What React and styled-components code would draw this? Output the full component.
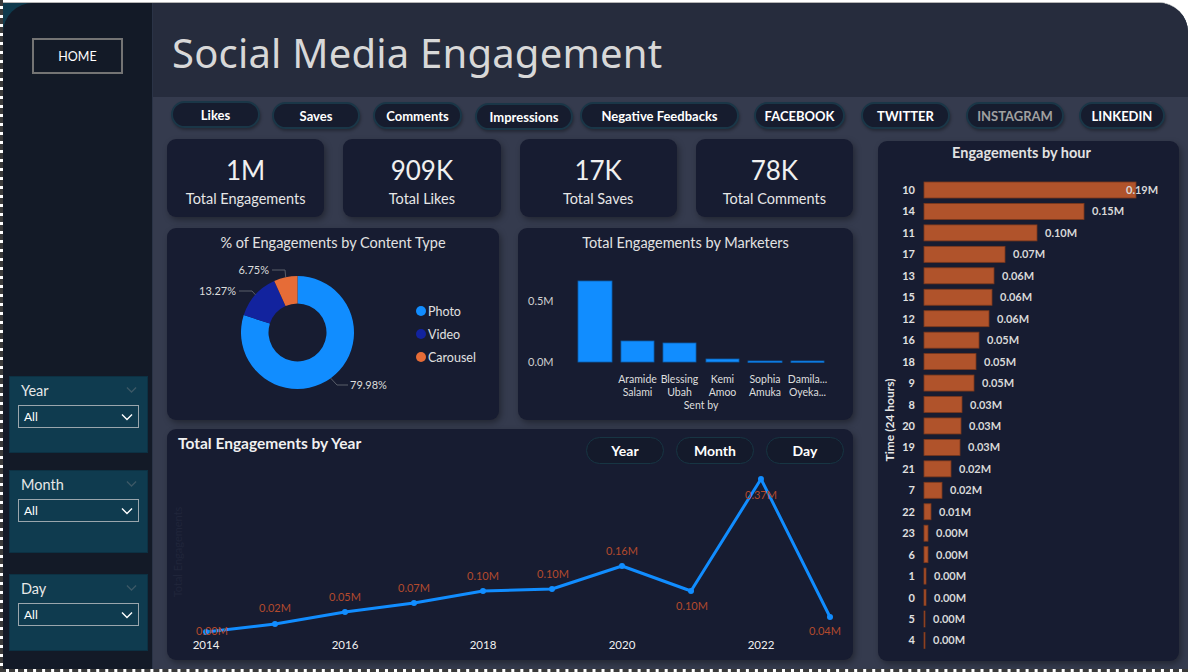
import React from "react";
import styled, { createGlobalStyle } from "styled-components";

const GlobalStyle = createGlobalStyle`
  html, body { margin: 0; padding: 0; background: #fff; }
  body { font-family: Lato, "Noto Sans", sans-serif; }
`;

const Page = styled.div`
  width: 1188px;
  height: 672px;
  box-sizing: border-box;
  padding-top: 2px;
  border-left: 3px dashed #3a3a3a;
  border-bottom: 3px dashed #3a3a3a;
  background: #fff;
  overflow: hidden;
`;

const Frame = styled.div`
  height: 100%;
  box-sizing: border-box;
  border-top: 1px solid #b5b5b5;
  border-top-right-radius: 30px;
  background: #0f3a4d;
  display: flex;
  overflow: hidden;
`;

const Sidebar = styled.aside`
  width: 150px;
  flex-shrink: 0;
  background: #131a27;
  border-right: 1px solid #2a3346;
  border-top-left-radius: 30px;
  display: flex;
  flex-direction: column;
  padding: 35px 0 18px 6px;
  box-sizing: border-box;
`;

const HomeButton = styled.div`
  width: 91px;
  height: 36px;
  margin-left: 23px;
  box-sizing: border-box;
  border: 2px solid #747474;
  color: #fff;
  font-size: 12.5px;
  display: flex;
  align-items: center;
  justify-content: center;
`;

const SlicerStack = styled.div`
  margin-top: auto;
  display: flex;
  flex-direction: column;
`;

const Slicer = styled.div`
  width: 139px;
  height: ${(p) => p.$h}px;
  margin-top: ${(p) => p.$gap || 0}px;
  box-sizing: border-box;
  background: #0f3b4f;
  border: 1px solid #0c3143;
  padding: 4px 10px 0 11px;
`;

const SlicerHead = styled.div`
  display: flex;
  justify-content: space-between;
  align-items: center;
  height: 18px;
  color: #e8e8e8;
  font-size: 14.5px;
`;

const Dropdown = styled.div`
  margin: 6px 0 0 -3px;
  width: 121px;
  height: 23px;
  box-sizing: border-box;
  border: 1px solid #9aa6ad;
  display: flex;
  align-items: center;
  justify-content: space-between;
  padding: 0 5px 0 5px;
  color: #fff;
  font-size: 12px;
`;

const Main = styled.main`
  flex: 1;
  display: flex;
  flex-direction: column;
  background: #353b4e;
`;

const Header = styled.header`
  height: 94px;
  flex-shrink: 0;
  background: #262c3d;
  display: flex;
  align-items: center;
  padding: 4px 0 0 19px;
  box-sizing: border-box;
`;

const Title = styled.h1`
  margin: 0;
  font-family: "Noto Sans", sans-serif;
  font-weight: 400;
  font-size: 40px;
  letter-spacing: 0.2px;
  color: #d8d8d8;
`;

const Content = styled.div`
  padding: 4px 8px 0 14px;
`;

const PillRow = styled.div`
  display: flex;
  padding: 0 0 0 4px;
  height: 29px;
`;

const Pill = styled.div`
  width: ${(p) => p.$w}px;
  height: 27px;
  margin-left: ${(p) => p.$gap}px;
  margin-top: ${(p) => p.$dy}px;
  box-sizing: border-box;
  border-radius: 14px;
  background: #161c2e;
  border: 2px solid #1a3647;
  box-shadow: 1px 2px 3px rgba(0, 0, 0, 0.3);
  color: ${(p) => (p.$muted ? "#a0a0a0" : "#fff")};
  font-weight: 700;
  font-size: 13px;
  display: flex;
  align-items: center;
  justify-content: center;
`;

const Body = styled.div`
  display: grid;
  grid-template-columns: 686px 301px;
  column-gap: 25px;
  margin-top: 9px;
`;

const LeftCol = styled.div`
  display: flex;
  flex-direction: column;
`;

const KpiRow = styled.div`
  display: grid;
  grid-template-columns: repeat(4, 1fr);
  column-gap: 19px;
  height: 78px;
`;

const ChartRow = styled.div`
  display: grid;
  grid-template-columns: 332px 335px;
  column-gap: 19px;
  height: 192px;
  margin-top: 11px;
`;

const Card = styled.section`
  background: #171c31;
  border-radius: 9px;
  box-shadow: 2px 3px 6px rgba(0, 0, 0, 0.35);
  overflow: hidden;
  margin-top: ${(p) => p.$top || 0}px;
  height: ${(p) => (p.$h ? `${p.$h}px` : "auto")};
`;

const KpiCard = styled(Card)`
  display: flex;
  flex-direction: column;
  align-items: center;
  padding-top: 17px;
  box-sizing: border-box;
`;

const KpiValue = styled.div`
  font-size: 26px;
  line-height: 28px;
  color: #f0f0f0;
`;

const KpiLabel = styled.div`
  margin-top: 6px;
  font-size: 14.5px;
  line-height: 18px;
  color: #e6e6e6;
`;

const ChartTitle = styled.div`
  height: 30px;
  box-sizing: border-box;
  padding-top: ${(p) => (p.$bold ? 3 : 6)}px;
  padding-right: ${(p) => (p.$bold ? 14 : 0)}px;
  line-height: 18px;
  text-align: center;
  font-size: 14.5px;
  color: #e2e2e2;
  font-weight: ${(p) => (p.$bold ? 700 : 400)};
`;

const LineHead = styled.div`
  display: flex;
  justify-content: space-between;
  align-items: flex-start;
  padding: 8px 9px 0 11px;
  height: 35px;
  box-sizing: border-box;
`;

const LineTitle = styled.div`
  margin-top: -4px;
  line-height: 20px;
  font-weight: 700;
  font-size: 15.5px;
  color: #f0f0f0;
`;

const ToggleGroup = styled.div`
  display: flex;
  gap: 12px;
`;

const Toggle = styled.div`
  width: 78px;
  height: 27px;
  box-sizing: border-box;
  border-radius: 14px;
  border: 1px solid #173543;
  background: #141a2b;
  color: #fff;
  font-weight: 700;
  font-size: 14px;
  display: flex;
  align-items: center;
  justify-content: center;
`;

const Chev = ({ color = "#fff", w = 12 }) => (
  <svg width={w} height={w / 2 + 2} viewBox="0 0 12 8">
    <polyline points="1,1.5 6,6.5 11,1.5" fill="none" stroke={color} strokeWidth="1.4" />
  </svg>
);

const pt = (cx, cy, rad, deg) => {
  const a = ((deg - 90) * Math.PI) / 180;
  return [cx + rad * Math.cos(a), cy + rad * Math.sin(a)];
};

const arc = (cx, cy, R, r, a0, a1) => {
  const large = a1 - a0 > 180 ? 1 : 0;
  const [x0, y0] = pt(cx, cy, R, a0);
  const [x1, y1] = pt(cx, cy, R, a1);
  const [x2, y2] = pt(cx, cy, r, a1);
  const [x3, y3] = pt(cx, cy, r, a0);
  return `M${x0} ${y0} A${R} ${R} 0 ${large} 1 ${x1} ${y1} L${x2} ${y2} A${r} ${r} 0 ${large} 0 ${x3} ${y3} Z`;
};

const Donut = () => {
  const cx = 130.5;
  const cy = 74.5;
  const segs = [
    [0, 287.93, "#118dff"],
    [287.93, 335.7, "#12239e"],
    [335.7, 360, "#e66c37"],
  ];
  const legend = [
    ["Photo", "#118dff"],
    ["Video", "#12239e"],
    ["Carousel", "#e66c37"],
  ];
  return (
    <svg width="332" height="162" fontFamily="Lato, sans-serif">
      {segs.map(([a0, a1, c]) => (
        <path key={c} d={arc(cx, cy, 56.5, 29, a0, a1)} fill={c} />
      ))}
      <g stroke="#5a5e6a" fill="none" strokeWidth="1">
        <polyline points="105,12 118,12 118.7,19" />
        <polyline points="72,33 85,33 88.4,36.8" />
        <polyline points="163.7,120.2 170,127 181,127" />
      </g>
      <g fill="#dcdcdc" fontSize="11">
        <text x="102" y="16" textAnchor="end">6.75%</text>
        <text x="69" y="37" textAnchor="end">13.27%</text>
        <text x="183" y="131">79.98%</text>
      </g>
      {legend.map(([l, c], i) => (
        <g key={l}>
          <circle cx="254" cy={53 + i * 23} r="5" fill={c} />
          <text x="261" y={57.5 + i * 23} fill="#e0e0e0" fontSize="12.5">{l}</text>
        </g>
      ))}
    </svg>
  );
};

const marketers = [
  [60, 94, 23, null, null],
  [103, 136, 83, "Aramide", "Salami"],
  [145, 178, 85, "Blessing", "Ubah"],
  [188, 221, 101, "Kemi", "Amoo"],
  [230, 264, 103, "Sophia", "Amuka"],
  [273, 306, 103, "Damila...", "Oyeka..."],
];

const MarketerBars = () => (
  <svg width="335" height="161" fontFamily="Lato, sans-serif">
    <g fill="#d0d0d0" fontSize="11">
      <text x="10" y="47">0.5M</text>
      <text x="10" y="108">0.0M</text>
    </g>
    {marketers.map(([x0, x1, top, a, b]) => (
      <g key={x0}>
        <rect x={x0} y={top} width={x1 - x0} height={Math.max(104 - top, 1.5)} fill="#118dff" stroke="#0c5fae" strokeWidth="0.8" />
        {a && (
          <text x={(x0 + x1) / 2} y="125" textAnchor="middle" fill="#dedede" fontSize="10.5">{a}</text>
        )}
        {b && (
          <text x={(x0 + x1) / 2} y="138" textAnchor="middle" fill="#dedede" fontSize="10.5">{b}</text>
        )}
      </g>
    ))}
    <text x="183" y="151" textAnchor="middle" fill="#dedede" fontSize="10.5">Sent by</text>
  </svg>
);

const years = [
  [39, 168, "0.00M", 45, 171],
  [108, 160, "0.02M", 108, 148],
  [178, 148, "0.05M", 178, 137],
  [247, 139, "0.07M", 247, 128],
  [316, 127, "0.10M", 316, 116],
  [385, 125, "0.10M", 386, 114],
  [455, 102, "0.16M", 455, 91],
  [524, 127, "0.10M", 525, 146],
  [594, 15, "0.37M", 594, 35],
  [663, 153, "0.04M", 658, 171],
];

const YearLine = () => (
  <svg width="684" height="196" fontFamily="Lato, sans-serif">
    <text x="15" y="88" transform="rotate(-90 15 88)" textAnchor="middle" fill="#20253a" fontSize="11">
      Total Engagements
    </text>
    <polyline
      points={years.map(([x, y]) => `${x},${y}`).join(" ")}
      fill="none"
      stroke="#118dff"
      strokeWidth="3"
      strokeLinejoin="round"
    />
    {years.map(([x, y, l, lx, ly], i) => (
      <g key={i}>
        <circle cx={x} cy={y} r="3" fill="#118dff" />
        <text x={lx} y={ly} textAnchor="middle" fill="#b34a2d" fontSize="11">{l}</text>
      </g>
    ))}
    {[["2014", 39], ["2016", 178], ["2018", 316], ["2020", 455], ["2022", 594]].map(([t, x]) => (
      <text key={t} x={x} y="185" textAnchor="middle" fill="#f0f0f0" fontSize="11.5">{t}</text>
    ))}
  </svg>
);

const hours = [
  [10, 212, "0.19M"], [14, 160, "0.15M"], [11, 113, "0.10M"], [17, 81, "0.07M"],
  [13, 70, "0.06M"], [15, 68, "0.06M"], [12, 65, "0.06M"], [16, 55, "0.05M"],
  [18, 52, "0.05M"], [9, 50, "0.05M"], [8, 38, "0.03M"], [20, 37, "0.03M"],
  [19, 36, "0.03M"], [21, 27, "0.02M"], [7, 18, "0.02M"], [22, 7, "0.01M"],
  [23, 4, "0.00M"], [6, 4, "0.00M"], [1, 2, "0.00M"], [0, 2, "0.00M"],
  [5, 1, "0.00M"], [4, 1, "0.00M"],
];

const HourBars = () => (
  <svg width="301" height="491" fontFamily="Lato, sans-serif" fontWeight="700">
    <text x="12" y="245" transform="rotate(-90 16 245)" textAnchor="middle" fill="#e6e6e6" fontSize="12">
      Time (24 hours)
    </text>
    {hours.map(([h, w, v], i) => {
      const cy = 19 + i * 21.45;
      return (
        <g key={h}>
          <text x="37" y={cy + 4} textAnchor="end" fill="#e0e0e0" fontSize="11">{h}</text>
          <rect x="46" y={cy - 8} width={w} height="16" fill="#b0532b" stroke="#7c391c" strokeWidth="0.8" />
          <text x={Math.min(46 + w + 8, 248)} y={cy + 4} fill="#d8d8d8" fontSize="11">{v}</text>
        </g>
      );
    })}
  </svg>
);

// label, width, gap before, vertical offset
const pills = [
  ["Likes", 89, 0, 0], ["Saves", 88, 12, 1], ["Comments", 89, 13, 1],
  ["Impressions", 98, 13, 2], ["Negative Feedbacks", 159, 7, 1],
  ["FACEBOOK", 91, 15, 1], ["TWITTER", 89, 16, 1],
  ["INSTAGRAM", 98, 16, 1, true], ["LINKEDIN", 86, 15, 1],
];

const kpis = [
  ["1M", "Total Engagements"],
  ["909K", "Total Likes"],
  ["17K", "Total Saves"],
  ["78K", "Total Comments"],
];

const slicers = [
  ["Year", 77, 0],
  ["Month", 83, 17],
  ["Day", 77, 21],
];

export default function App() {
  return (
    <>
      <GlobalStyle />
      <Page>
        <Frame>
          <Sidebar>
            <HomeButton>HOME</HomeButton>
            <SlicerStack>
              {slicers.map(([name, h, gap]) => (
                <Slicer key={name} $h={h} $gap={gap}>
                  <SlicerHead>
                    {name}
                    <Chev color="#3c5866" w={11} />
                  </SlicerHead>
                  <Dropdown>
                    All
                    <Chev />
                  </Dropdown>
                </Slicer>
              ))}
            </SlicerStack>
          </Sidebar>
          <Main>
            <Header>
              <Title>Social Media Engagement</Title>
            </Header>
            <Content>
              <PillRow>
                {pills.map(([t, w, g, dy, m]) => (
                  <Pill key={t} $w={w} $gap={g} $dy={dy} $muted={m}>{t}</Pill>
                ))}
              </PillRow>
              <Body>
                <LeftCol>
                  <KpiRow>
                    {kpis.map(([v, l]) => (
                      <KpiCard key={l}>
                        <KpiValue>{v}</KpiValue>
                        <KpiLabel>{l}</KpiLabel>
                      </KpiCard>
                    ))}
                  </KpiRow>
                  <ChartRow>
                    <Card>
                      <ChartTitle>% of Engagements by Content Type</ChartTitle>
                      <Donut />
                    </Card>
                    <Card>
                      <ChartTitle>Total Engagements by Marketers</ChartTitle>
                      <MarketerBars />
                    </Card>
                  </ChartRow>
                  <Card $top={9} $h={231}>
                    <LineHead>
                      <LineTitle>Total Engagements by Year</LineTitle>
                      <ToggleGroup>
                        <Toggle>Year</Toggle>
                        <Toggle>Month</Toggle>
                        <Toggle>Day</Toggle>
                      </ToggleGroup>
                    </LineHead>
                    <YearLine />
                  </Card>
                </LeftCol>
                <Card $top={2} $h={520}>
                  <ChartTitle $bold>Engagements by hour</ChartTitle>
                  <HourBars />
                </Card>
              </Body>
            </Content>
          </Main>
        </Frame>
      </Page>
    </>
  );
}
